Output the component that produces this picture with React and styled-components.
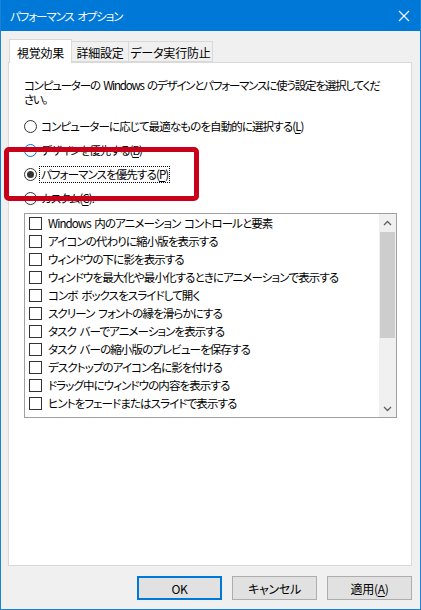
import React, { useState } from 'react'
import styled, { createGlobalStyle } from 'styled-components'

const GlobalStyle = createGlobalStyle`
  html, body {
    margin: 0;
    padding: 0;
    background: #f0f0f0;
  }
  * {
    box-sizing: border-box;
  }
`

const effects = [
  'Windows 内のアニメーション コントロールと要素',
  'アイコンの代わりに縮小版を表示する',
  'ウィンドウの下に影を表示する',
  'ウィンドウを最大化や最小化するときにアニメーションで表示する',
  'コンボ ボックスをスライドして開く',
  'スクリーン フォントの縁を滑らかにする',
  'タスク バーでアニメーションを表示する',
  'タスク バーの縮小版のプレビューを保存する',
  'デスクトップのアイコン名に影を付ける',
  'ドラッグ中にウィンドウの内容を表示する',
  'ヒントをフェードまたはスライドで表示する',
]

const radios = [
  { id: 'auto', label: 'コンピューターに応じて最適なものを自動的に選択する', key: 'L' },
  { id: 'look', label: 'デザインを優先する', key: 'B', hover: true },
  { id: 'perf', label: 'パフォーマンスを優先する', key: 'P', focus: true },
  { id: 'custom', label: 'カスタム', key: 'C', colon: true },
]

function App() {
  const [selected, setSelected] = useState('perf')

  return (
    <>
      <GlobalStyle />
      <Window>
        <TitleBar>
          <Title>パフォーマンス オプション</Title>
          <CloseBtn>
            <svg width="12" height="12" viewBox="0 0 12 12">
              <path d="M1 1 L11 11 M11 1 L1 11" stroke="#fff" strokeWidth="1.1" fill="none" />
            </svg>
          </CloseBtn>
        </TitleBar>

        <Body>
          <Tabs>
            <Tab active w={63}>視覚効果</Tab>
            <Tab w={57}>詳細設定</Tab>
            <Tab w={84}>データ実行防止</Tab>
          </Tabs>

          <Panel>
            <Desc>
              <div>コンピューターの Windows のデザインとパフォーマンスに使う設定を選択してくだ</div>
              <div>さい。</div>
            </Desc>

            <RadioGroup>
              {radios.map(r => (
                <RadioRow key={r.id} onClick={() => setSelected(r.id)}>
                  <RadioCircle hover={r.hover} checked={selected === r.id} />
                  <RadioLabel focus={r.focus}>
                    {r.label}(<u>{r.key}</u>){r.colon ? ':' : ''}
                  </RadioLabel>
                </RadioRow>
              ))}
            </RadioGroup>

            <ListBox>
              <ListItems>
                {effects.map(e => (
                  <CheckRow key={e}>
                    <CheckBox />
                    <span>{e}</span>
                  </CheckRow>
                ))}
              </ListItems>
              <ScrollBar>
                <ScrollArrow>
                  <svg width="9" height="6" viewBox="0 0 9 6">
                    <path d="M1 5 L4.5 1.5 L8 5" stroke="#606060" strokeWidth="1.3" fill="none" />
                  </svg>
                </ScrollArrow>
                <Track>
                  <Thumb />
                </Track>
                <ScrollArrow>
                  <svg width="9" height="6" viewBox="0 0 9 6">
                    <path d="M1 1 L4.5 4.5 L8 1" stroke="#606060" strokeWidth="1.3" fill="none" />
                  </svg>
                </ScrollArrow>
              </ScrollBar>
            </ListBox>
          </Panel>

          <Buttons>
            <Button primary>OK</Button>
            <Button>キャンセル</Button>
            <Button>適用(<u>A</u>)</Button>
          </Buttons>
        </Body>

        {/* annotation */}
        <Highlight />
      </Window>
    </>
  )
}

export default App

const Window = styled.div`
  position: relative;
  width: 421px;
  height: 610px;
  background: #f0f0f0;
  border: 1px solid #1883d7;
  border-top: none;
  display: flex;
  flex-direction: column;
  font-family: "Noto Sans CJK JP", "Noto Sans", sans-serif;
  font-feature-settings: "palt";
  font-size: 11.5px;
  letter-spacing: -0.9px;
  word-spacing: 2px;
  color: #000;
  overflow: hidden;
`

const TitleBar = styled.div`
  height: 31px;
  margin: 0 -1px;
  background: #0078d7;
  color: #fff;
  display: flex;
  align-items: center;
  justify-content: space-between;
  padding-left: 10px;
`

const Title = styled.div`
  font-size: 11.5px;
  letter-spacing: -1.1px;
`

const CloseBtn = styled.div`
  width: 46px;
  height: 31px;
  display: flex;
  align-items: center;
  justify-content: center;
  margin-right: -6px;
`

const Body = styled.div`
  flex: 1;
  display: flex;
  flex-direction: column;
  padding: 8px 8px 9px 7px;
`

const Tabs = styled.div`
  display: flex;
  align-items: flex-end;
  height: 23px;
  padding-left: 1px;
  position: relative;
  z-index: 1;
`

const Tab = styled.div`
  width: ${p => p.w}px;
  height: ${p => (p.active ? 24 : 21)}px;
  background: ${p => (p.active ? '#fff' : '#f0f0f0')};
  border: 1px solid #d9d9d9;
  border-bottom: ${p => (p.active ? 'none' : '1px solid #d9d9d9')};
  border-left: ${p => (p.active ? '1px solid #d9d9d9' : 'none')};
  margin-bottom: ${p => (p.active ? '-1px' : '0')};
  display: flex;
  align-items: center;
  justify-content: center;
  font-size: 12px;
  letter-spacing: -0.2px;
  padding-top: 1px;
`

const Panel = styled.div`
  flex: 1;
  background: #fff;
  border: 1px solid #d9d9d9;
  padding: 15px 0 0 15px;
  display: flex;
  flex-direction: column;
`

const Desc = styled.div`
  line-height: 14px;
  white-space: nowrap;
  letter-spacing: -1.2px;
`

const RadioGroup = styled.div`
  display: flex;
  flex-direction: column;
  margin-top: 8px;
`

const RadioRow = styled.div`
  height: 24px;
  display: flex;
  align-items: center;
  gap: 3px;
`

const RadioCircle = styled.div`
  width: 13px;
  height: 13px;
  border-radius: 50%;
  border: 1px solid ${p => (p.hover ? '#0078d7' : '#333')};
  position: relative;
  &::after {
    content: '';
    display: ${p => (p.checked ? 'block' : 'none')};
    position: absolute;
    left: 2px;
    top: 2px;
    width: 7px;
    height: 7px;
    border-radius: 50%;
    background: #333;
  }
`

const RadioLabel = styled.span`
  padding: 0 1px;
  line-height: 15px;
  outline: ${p => (p.focus ? '1px dotted #000' : 'none')};
  u {
    text-decoration-thickness: 1px;
    text-underline-offset: 2px;
  }
`

const ListBox = styled.div`
  margin-top: 3px;
  width: 373px;
  height: 205px;
  border: 1px solid #a0a0a0;
  display: flex;
`

const ListItems = styled.div`
  flex: 1;
  overflow: hidden;
  padding-left: 4px;
`

const CheckRow = styled.div`
  height: 18px;
  display: flex;
  align-items: center;
  gap: 6px;
  white-space: nowrap;
`

const CheckBox = styled.div`
  width: 13px;
  height: 13px;
  border: 1px solid #333;
  background: #fff;
  flex: none;
`

const ScrollBar = styled.div`
  width: 17px;
  background: #f0f0f0;
  display: flex;
  flex-direction: column;
`

const ScrollArrow = styled.div`
  height: 17px;
  display: flex;
  align-items: center;
  justify-content: center;
`

const Track = styled.div`
  flex: 1;
  padding: 1px 1px 0;
`

const Thumb = styled.div`
  height: 106px;
  background: #cdcdcd;
`

const Buttons = styled.div`
  display: flex;
  justify-content: flex-end;
  gap: 10px;
  margin-top: 10px;
`

const Button = styled.div`
  width: 85px;
  height: 24px;
  background: #e1e1e1;
  border: ${p => (p.primary ? '2px solid #0078d7' : '1px solid #adadad')};
  display: flex;
  align-items: center;
  justify-content: center;
  font-size: 12px;
  letter-spacing: -0.3px;
  u {
    text-underline-offset: 2px;
  }
`

const Highlight = styled.div`
  position: absolute;
  left: 3px;
  top: 147px;
  width: 195px;
  height: 54px;
  border: 5px solid #c8001a;
  border-radius: 5px;
  pointer-events: none;
`
